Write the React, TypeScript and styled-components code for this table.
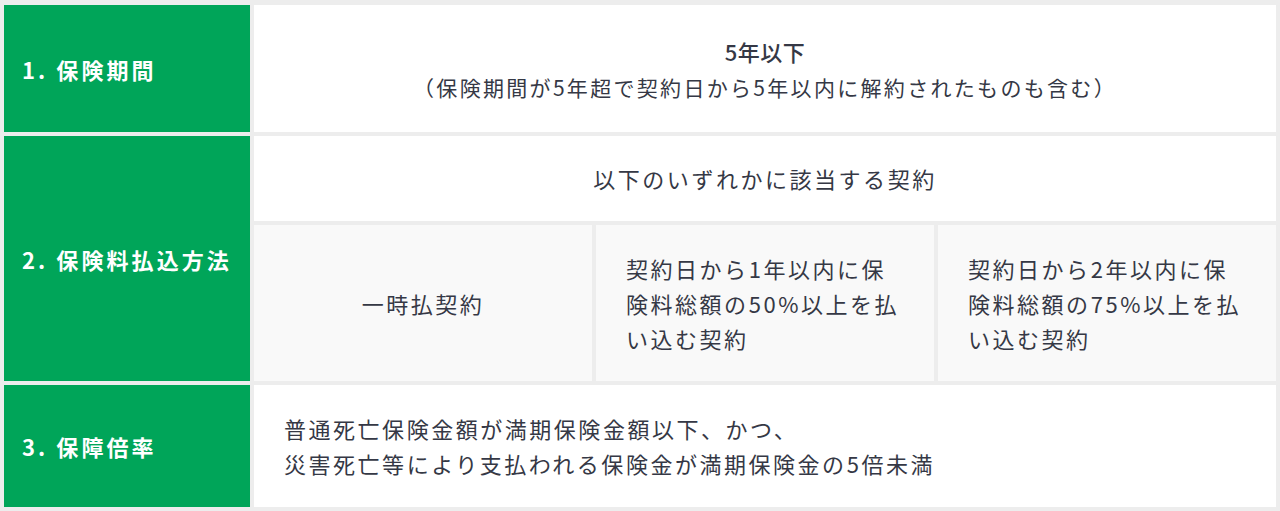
import React from 'react';
import styled, { createGlobalStyle } from 'styled-components';

const GlobalStyle = createGlobalStyle`
  html, body {
    margin: 0;
    padding: 0;
    background: #fff;
  }
  body {
    font-family: "Noto Sans CJK JP", "Noto Sans", sans-serif;
  }
`;

const Table = styled.div`
  display: grid;
  grid-template-columns: 246px 1fr;
  grid-template-rows: 127px 245px 122px;
  gap: 4px;
  width: 1280px;
  box-sizing: border-box;
  padding: 5px 4px 4px;
  background: #ededed;
  color: #353845;
`;

const Head = styled.div`
  display: flex;
  align-items: center;
  padding-left: 18px;
  background: #00a559;
  color: #fff;
  font-size: 22px;
  font-weight: 700;
  letter-spacing: 0.14em;
`;

const Cell = styled.div<{ $muted?: boolean; $align?: 'left' | 'center' }>`
  display: flex;
  flex-direction: column;
  justify-content: center;
  align-items: ${(p) => (p.$align === 'left' ? 'flex-start' : 'center')};
  text-align: ${(p) => p.$align || 'center'};
  padding: 0 30px;
  background: ${(p) => (p.$muted ? '#f9f9f9' : '#fff')};
  font-size: 22px;
  line-height: 35px;
  letter-spacing: 0.115em;
`;

const Title = styled.div`
  font-size: 22px;
  font-weight: 500;
  line-height: 36px;
  letter-spacing: 0.02em;
`;

const Note = styled.div`
  font-size: 21px;
  line-height: 36px;
  letter-spacing: 0.11em;
`;

const Split = styled.div`
  display: grid;
  grid-template-rows: 85px 1fr;
  gap: 4px;
`;

const Options = styled.div`
  display: grid;
  grid-template-columns: repeat(3, 1fr);
  gap: 4px;
`;

const options = [
  { text: '一時払契約', align: 'center' as const },
  { text: '契約日から1年以内に保険料総額の50%以上を払い込む契約', align: 'left' as const },
  { text: '契約日から2年以内に保険料総額の75%以上を払い込む契約', align: 'left' as const },
];

const App = () => {
  return (
    <>
      <GlobalStyle />
      <Table>
        <Head>1. 保険期間</Head>
        <Cell>
          <Title>5年以下</Title>
          <Note>（保険期間が5年超で契約日から5年以内に解約されたものも含む）</Note>
        </Cell>

        <Head>2. 保険料払込方法</Head>
        <Split>
          <Cell>以下のいずれかに該当する契約</Cell>
          <Options>
            {options.map((o) => (
              <Cell key={o.text} $muted $align={o.align}>
                {o.text}
              </Cell>
            ))}
          </Options>
        </Split>

        <Head>3. 保障倍率</Head>
        <Cell $align='left'>
          <div>普通死亡保険金額が満期保険金額以下、かつ、</div>
          <div>災害死亡等により支払われる保険金が満期保険金の5倍未満</div>
        </Cell>
      </Table>
    </>
  );
};

export default App;
